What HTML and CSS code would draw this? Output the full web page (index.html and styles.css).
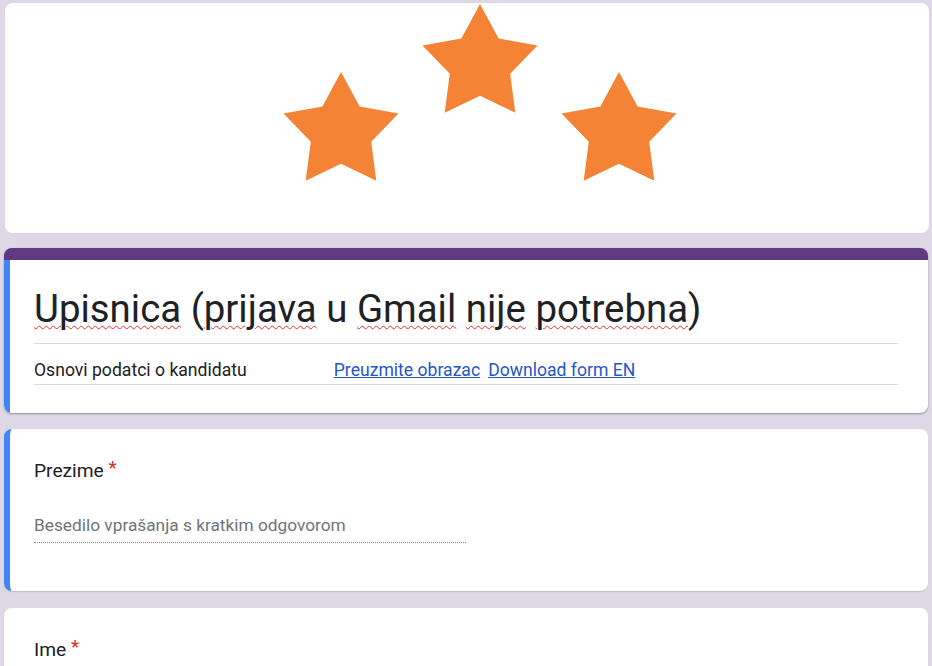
FILE: index.html
```html
<!DOCTYPE html>
<html lang="sl">
<head>
  <meta charset="UTF-8">
  <meta name="viewport" content="width=device-width, initial-scale=1.0">
  <title>Upisnica</title>
  <link rel="stylesheet" href="styles.css">
</head>
<body>
  <div class="form-page">
    <div class="header-card">
      <svg class="header-image" viewBox="0 0 924 230" xmlns="http://www.w3.org/2000/svg">
        <defs>
          <filter id="soft" x="-10%" y="-10%" width="120%" height="120%">
            <feGaussianBlur stdDeviation="0.6"/>
          </filter>
          <polygon id="star" points="0,-60 18.6,-25.6 57.5,-18.6 30.2,9.8 35.3,48.8 0,31.8 -35.3,48.8 -30.2,9.8 -57.5,-18.6 -18.6,-25.6"/>
        </defs>
        <g fill="#f48336" filter="url(#soft)">
          <use href="#star" x="336" y="129"/>
          <use href="#star" x="475" y="61"/>
          <use href="#star" x="614" y="129"/>
        </g>
      </svg>
    </div>

    <div class="title-card">
      <div class="title-inner">
        <h1 class="form-title"><span class="typo">Upisnica</span> (<span class="typo">prijava</span> u <span class="typo">Gmail</span> <span class="typo">nije</span> <span class="typo">potrebna</span>)</h1>
        <div class="form-desc">
          <span>Osnovi podatci o kandidatu</span>
          <a href="#" class="desc-link first">Preuzmite obrazac</a>
          <a href="#" class="desc-link">Download form EN</a>
        </div>
      </div>
    </div>

    <div class="question-card active">
      <div class="question-title">Prezime <span class="required">*</span></div>
      <div class="answer-field">Besedilo vprašanja s kratkim odgovorom</div>
    </div>

    <div class="question-card">
      <div class="question-title">Ime <span class="required">*</span></div>
      <div class="answer-field">Besedilo vprašanja s kratkim odgovorom</div>
    </div>
  </div>
</body>
</html>
```

FILE: styles.css
```css
body {
  font-family: Roboto, "Noto Sans", Arial, sans-serif;
  background-color: #ded7e6;
  color: #202124;
  margin: 0;
  padding: 0;
}
.form-page {
  padding: 3px 4px 0;
}
.header-card {
  background: #fff;
  border-radius: 8px;
  height: 230px;
  margin: 0 -1px 0 1px;
  overflow: hidden;
}
.header-image {
  display: block;
  width: 100%;
  height: 230px;
}
.title-card {
  margin-top: 15px;
  background: #fff;
  border-radius: 8px;
  border-top: 12px solid #603980;
  box-shadow: 0 1px 2px rgba(0, 0, 0, 0.35);
  overflow: hidden;
}
.title-inner {
  border-left: 6px solid #4285f4;
  padding: 0 30px 28px 24px;
}
.form-title {
  font-size: 38.4px;
  font-weight: 400;
  line-height: 48px;
  margin: 0;
  padding: 25px 0 10px;
  border-bottom: 1px solid #dadce0;
}
.typo {
  text-decoration: underline wavy #e2302b;
  text-decoration-thickness: 1px;
  text-underline-offset: 3px;
}
.form-desc {
  display: flex;
  font-size: 17.6px;
  line-height: 26.4px;
  padding: 13px 0 1px;
  border-bottom: 1px solid #dadce0;
}
.desc-link {
  color: #2457c5;
  text-decoration: underline;
  margin-left: 8px;
}
.desc-link.first {
  margin-left: 87px;
}
.question-card {
  margin-top: 16px;
  background: #fff;
  border-radius: 8px;
  padding: 28px 30px 48px;
  box-shadow: 0 1px 1px rgba(0, 0, 0, 0.12);
}
.question-card.active {
  border-left: 6px solid #4285f4;
  padding-left: 24px;
}
.question-card + .question-card {
  margin-top: 17px;
}
.question-title {
  font-size: 19.2px;
  line-height: 28.8px;
}
.required {
  color: #d93025;
  font-size: 19.2px;
  position: relative;
  top: -3px;
}
.answer-field {
  width: 432px;
  margin-top: 27px;
  padding-bottom: 5px;
  font-size: 17.3px;
  line-height: 24px;
  color: #70757a;
  border-bottom: 1px dotted #8a8d91;
}
```
